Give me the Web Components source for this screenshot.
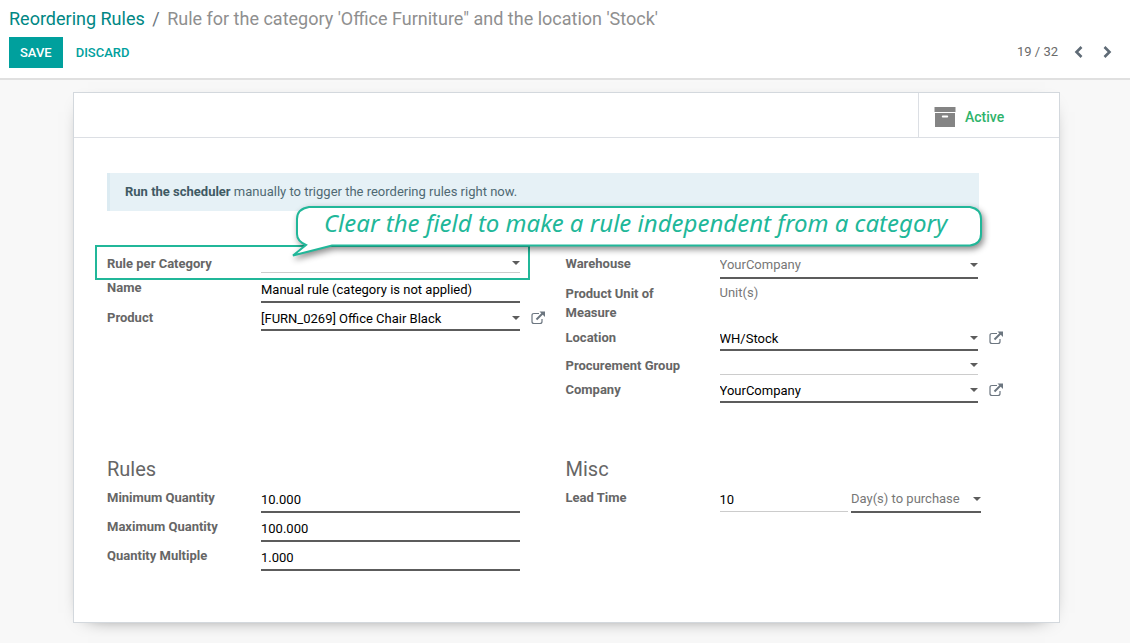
<!DOCTYPE html>
<html lang="en">
<head>
<meta charset="utf-8">
<meta name="viewport" content="width=device-width, initial-scale=1">
<title>Reordering Rules</title>
<style>
  body {
    margin: 0;
    min-height: 100vh;
    background: #f8f8f8;
    color: #666;
    font: 13px/20px Roboto, "Liberation Sans", sans-serif;
  }
</style>
</head>
<body>
<control-panel>
  <a slot="trail" href="#rules">Reordering Rules</a>
  <span slot="title">Rule for the category 'Office Furniture" and the location 'Stock'</span>
  <record-pager slot="pager" position="19" total="32"></record-pager>
</control-panel>
<form-sheet>
  <stat-button slot="stats">Active</stat-button>
  <scheduler-notice slot="notice"></scheduler-notice>
  <field-group slot="main">
    <form-field label="Rule per Category" kind="relation" empty highlight></form-field>
    <form-field label="Name" kind="text" value="Manual rule (category is not applied)"></form-field>
    <form-field label="Product" kind="relation" value="[FURN_0269] Office Chair Black" link></form-field>
  </field-group>
  <field-group slot="main">
    <form-field label="Warehouse" kind="select" value="YourCompany"></form-field>
    <form-field label="Product Unit of Measure" kind="static" value="Unit(s)"></form-field>
    <form-field label="Location" kind="relation" value="WH/Stock" link></form-field>
    <form-field label="Procurement Group" kind="relation" empty></form-field>
    <form-field label="Company" kind="relation" value="YourCompany" link></form-field>
  </field-group>
  <field-group slot="extra" heading="Rules">
    <form-field label="Minimum Quantity" kind="text" value="10.000"></form-field>
    <form-field label="Maximum Quantity" kind="text" value="100.000"></form-field>
    <form-field label="Quantity Multiple" kind="text" value="1.000"></form-field>
  </field-group>
  <field-group slot="extra" heading="Misc">
    <form-field label="Lead Time" kind="duration" value="10" unit="Day(s) to purchase"></form-field>
  </field-group>
  <hint-bubble slot="hint">Clear the field to make a rule independent from a category</hint-bubble>
</form-sheet>

<script>
const define = (name, render) => customElements.define(name, class extends HTMLElement {
  constructor() {
    super();
    this.attachShadow({ mode: "open" });
  }
  connectedCallback() {
    this.shadowRoot.innerHTML = render(this);
  }
});

const escapeText = (text) => (text || "").replace(/[&<>"]/g, (c) => `&#${c.charCodeAt(0)};`);

define("control-panel", () => `
  <style>
    :host { display: block; box-sizing: border-box; background: #fff; border-bottom: 2px solid #e0e0e0; padding: 8px 9px 10px; }
    nav { font-size: 18px; line-height: 22px; color: #8f8f8f; }
    .sep { color: #6c757d; padding: 0 3px; }
    ::slotted(a) { color: #008784; text-decoration: none; }
    .bar { display: flex; justify-content: space-between; align-items: center; margin-top: 7px; }
    .actions { display: flex; gap: 2px; }
    button { font: 500 13px/21px Roboto, sans-serif; padding: 4px 10px; border: 1px solid transparent; background: none; color: #00a09d; text-transform: uppercase; }
    .primary { background: #00a09d; border-color: #00a09d; color: #fff; }
  </style>
  <nav aria-label="Breadcrumb"><slot name="trail"></slot> <span class="sep">/</span> <slot name="title"></slot></nav>
  <div class="bar">
    <div class="actions"><button class="primary" type="button">Save</button><button type="button">Discard</button></div>
    <slot name="pager"></slot>
  </div>`);

define("record-pager", (el) => `
  <style>
    :host { display: flex; align-items: center; color: #6c757d; padding: 0 8px 2px 0; }
    span { margin-right: 15px; color: #6a6a6a; }
    button { display: flex; border: 0; padding: 0; background: none; color: #5f6b76; }
    button + button { margin-left: 16px; }
    svg { width: 12px; height: 14px; }
  </style>
  <span>${el.getAttribute("position")} / ${el.getAttribute("total")}</span>
  <button type="button" aria-label="Previous"><svg viewBox="0 0 12 14"><path d="M8.500 2 3.500 7l5 5" fill="none" stroke="currentColor" stroke-width="2.600"/></svg></button>
  <button type="button" aria-label="Next"><svg viewBox="0 0 12 14"><path d="m3.500 2 5 5-5 5" fill="none" stroke="currentColor" stroke-width="2.600"/></svg></button>`);

define("form-sheet", () => `
  <style>
    :host { display: block; position: relative; margin: 12px 70px 20px 73px; background: #fff; border: 1px solid #d3d8dd; box-shadow: 0 5px 20px -15px #000; }
    .stats { display: flex; justify-content: flex-end; height: 44px; border-bottom: 1px solid #dcdfe4; }
    .content { padding: 35px 35px 51px 33px; }
    .pair { display: grid; grid-template-columns: 1fr 1fr; }
    .main { margin: 42px 0 54px; }
  </style>
  <div class="stats"><slot name="stats"></slot></div>
  <div class="content">
    <slot name="notice"></slot>
    <div class="pair main"><slot name="main"></slot></div>
    <div class="pair"><slot name="extra"></slot></div>
  </div>
  <slot name="hint"></slot>`);

define("stat-button", () => `
  <style>
    :host { display: flex; flex: 0 0 140px; border-left: 1px solid #dcdfe4; }
    button { flex: 1; display: flex; align-items: center; gap: 9px; padding: 4px 15px 0; border: 0; background: none; font: 500 14px/20px Roboto, sans-serif; color: #2fb36b; }
    svg { width: 22px; height: 20px; }
  </style>
  <button type="button">
    <svg viewBox="0 0 22 20" fill="#848484" aria-hidden="true"><path d="M.5 0h21v5h-21z"/><path fill-rule="evenodd" d="M1 6h20v14H1zm7.800 2.500a1 1 0 0 0 0 2h4.400a1 1 0 0 0 0-2z"/></svg>
    <slot></slot>
  </button>`);

define("scheduler-notice", () => `
  <style>
    :host { display: block; margin-right: 45px; padding: 9px 15px; background: #e6f1f6; border-left: 3px solid #dcebf2; color: #4f6973; }
    a { color: #3f5a64; font-weight: 700; text-decoration: none; }
  </style>
  <a href="#run">Run the scheduler</a> manually to trigger the reordering rules right now.`);

define("field-group", (el) => {
  const heading = el.getAttribute("heading");
  return `
  <style>
    :host { display: flex; flex-direction: column; gap: ${heading ? 3 : 4}px; min-width: 0; }
    h2 { margin: 0 0 3px; font-size: 20px; line-height: 24px; font-weight: 400; color: #666; }
  </style>
  ${heading ? `<h2>${escapeText(heading)}</h2>` : ""}
  <slot></slot>`;
});

define("form-field", (el) => {
  const kind = el.getAttribute("kind");
  const label = escapeText(el.getAttribute("label"));
  const value = escapeText(el.getAttribute("value"));
  const caret = `<svg class="caret" viewBox="0 0 8 4" aria-hidden="true"><path d="M0 0h8L4 4z" fill="#5c5c5c"/></svg>`;
  const controls = {
    text: `<div class="box tall"><input id="f" type="text" value="${value}"></div>`,
    relation: `<div class="box ${el.hasAttribute("empty") ? "empty" : ""}"><input id="f" type="text" value="${value}">${caret}</div>`,
    select: `<div class="box tall"><select id="f"><option>${value}</option></select>${caret}</div>`,
    static: `<output id="f">${value}</output>`,
    duration: `<div class="duration"><div class="box tall thin"><input id="f" type="text" value="${value}"></div>
      <div class="box tall"><select aria-label="Lead time type"><option>${escapeText(el.getAttribute("unit"))}</option></select>${caret}</div></div>`
  };
  return `
  <style>
    :host { display: grid; grid-template-columns: 154px minmax(0, 1fr) 46px; align-items: start; position: relative; }
    :host([kind="static"]) { min-height: 40px; }
    :host([highlight])::after { content: ""; position: absolute; inset: -8px 36px -7px -12px; border: 2px solid #21b799; pointer-events: none; }
    label { padding: 1px 20px 0 0; line-height: 19px; font-weight: 700; color: #666; }
    .box { display: grid; grid-template-columns: minmax(0, 1fr); align-items: center; height: 22px; border-bottom: 2px solid #5c5c5c; }
    .tall { height: 24px; }
    .thin { border-bottom: 1px solid #ccc; }
    .empty { height: 19px; border-bottom: 1px solid #ccc; }
    .box > * { grid-row: 1; grid-column: 1; }
    input, select { box-sizing: border-box; width: 100%; height: 100%; margin: 0; padding: 0; border: 0; border-radius: 0; outline: 0; background: none; font: inherit; color: #000; appearance: none; }
    select { color: #777; }
    .caret { justify-self: end; width: 8px; height: 4px; pointer-events: none; }
    output { color: #777; }
    .duration { display: grid; grid-template-columns: minmax(0, 1fr) 130px; gap: 3px; align-items: start; margin-right: -3px; }
    .open { display: flex; border: 0; padding: 0; margin: 4px 0 0 11px; width: 15px; background: none; color: #6c7680; }
    .open svg { width: 15px; height: 14px; }
  </style>
  <label for="f">${label}</label>
  ${controls[kind]}
  ${el.hasAttribute("link") ? `<button class="open" type="button" aria-label="Open ${label}"><svg viewBox="0 0 15 14" fill="none" stroke="currentColor"><path d="M8 2.500H3Q1 2.500 1 4.500v6Q1 12.500 3 12.500h6q2 0 2-2V8" stroke-width="1.200"/><path d="m5.500 8.500 6-6" stroke-width="2"/><path d="M8.500.5H14V6z" fill="currentColor" stroke="none"/></svg></button>` : ""}`;
});

define("hint-bubble", () => `
  <style>
    :host { display: block; position: absolute; top: 107px; left: 216px; width: 700px; height: 60px; color: #21b799; }
    svg { display: block; width: 700px; height: 60px; overflow: visible; filter: drop-shadow(2px 3px 3px rgba(0, 0, 0, .45)); }
    p { position: absolute; top: 8px; left: 34px; margin: 0; font: italic 24px/30px "Noto Sans", sans-serif; white-space: nowrap; }
  </style>
  <svg viewBox="0 0 700 60" aria-hidden="true"><path d="M19 7H680Q691 9 691 19V34Q691 44 680 45.500H42L3 55.500 16 45Q7 41 7 34V19Q7 9 19 7Z" fill="#fff" stroke="currentColor" stroke-width="2"/></svg>
  <p><slot></slot></p>`);
</script>
</body>
</html>
